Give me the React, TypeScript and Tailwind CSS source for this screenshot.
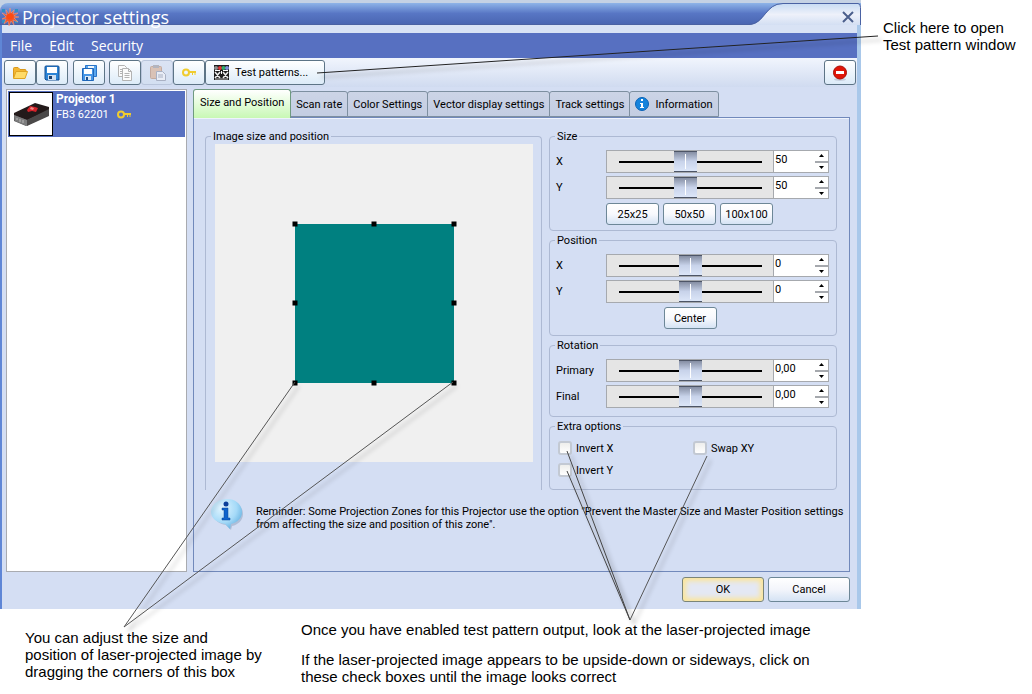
import { useState } from "react";
import type { ReactNode } from "react";

type SliderRowProps = {
    id: string;
    label: string;
    value: string;
    position: number;
};

const tabs = ["Size and Position", "Scan rate", "Color Settings", "Vector display settings", "Track settings", "Information"];

const handles = [
    "left-0 top-0",
    "left-1/2 top-0",
    "left-full top-0",
    "left-0 top-1/2",
    "left-full top-1/2",
    "left-0 top-full",
    "left-1/2 top-full",
    "left-full top-full"
];

function StarIcon() {
    return (
        <svg viewBox="0 0 18 18" className="size-[18px]" aria-hidden="true">
            <g fill="#2f8fc4">
                <rect x="1" y="1" width="3" height="3" />
                <rect x="14" y="1" width="3" height="3" />
                <rect x="1" y="12" width="3" height="3" />
                <rect x="14" y="12" width="3" height="3" />
            </g>
            <path
                d="M9 0l1 5 3-3-1 4 5-1-4 3 5 1-5 1 4 4-5-2 1 5-3-4-2 5-1-5-4 3 2-5-4 0 4-2-4-4 5 2-1-5 3 4z"
                fill="#f0562a"
                stroke="#f2a58c"
                strokeWidth="0.5"
            />
            <circle cx="9" cy="8.500" r="3" fill="#ff4a10" />
        </svg>
    );
}

function FolderIcon() {
    return (
        <svg viewBox="0 0 18 16" className="h-4 w-[18px]" aria-hidden="true">
            <path d="M2.500 13V3.500q0-1 1-1H7l2 2h5q1 0 1 1V7" fill="#f3b632" stroke="#d9981c" />
            <path d="M2.500 13.500l2.500-7h11.500l-2.500 7z" fill="#ffdb68" stroke="#e0a422" strokeLinejoin="round" />
        </svg>
    );
}

function SaveIcon() {
    return (
        <svg viewBox="0 0 16 16" className="size-4" aria-hidden="true">
            <path d="M1 2q0-1 1-1h12q1 0 1 1v13H2l-1-1z" fill="#2b84d6" stroke="#124f94" />
            <rect x="3" y="2" width="10" height="6" fill="#fff" />
            <rect x="4" y="10" width="8" height="5" fill="#cfdff0" />
            <rect x="5" y="11" width="3" height="3" fill="#1b3f6c" />
        </svg>
    );
}

function SaveAllIcon() {
    return (
        <svg viewBox="0 0 18 16" className="h-4 w-[18px]" aria-hidden="true">
            <path d="M5.500 .5h11v11h-11z" fill="#58a6ee" stroke="#2a74c8" />
            <rect x="8" y="1" width="6" height="3" fill="#eef6fd" />
            <path d="M2.500 3.500h11v12h-11z" fill="#4696e6" stroke="#1f67ba" />
            <rect x="4" y="4" width="8" height="5" fill="#fff" />
            <rect x="5" y="11" width="6" height="4" fill="#dce9f7" />
            <rect x="6" y="12" width="2" height="3" fill="#1c4f8c" />
        </svg>
    );
}

function CopyIcon() {
    return (
        <svg viewBox="0 0 16 16" className="size-4" fill="#fbfbfb" stroke="#b3b3b3" aria-hidden="true">
            <path d="M1.500 .5h6l2 2v9h-8z" />
            <path d="M3 4.500h3M3 6.500h3M3 8.500h3" />
            <path d="M5.500 3.500h6l3 3v9h-9z" />
            <path d="M11.500 3.500v3h3M7.500 8.500h5M7.500 10.500h5M7.500 12.500h5" fill="none" />
        </svg>
    );
}

function PasteIcon() {
    return (
        <svg viewBox="0 0 17 17" className="size-[17px]" aria-hidden="true">
            <rect x="1.500" y="2.500" width="11" height="12" rx="1" fill="#d9c2b6" stroke="#c4aba0" />
            <rect x="4" y="1" width="6" height="3" fill="#b3b4be" />
            <path d="M7.500 7.500h6l3 3v6h-9z" fill="#e9edf6" stroke="#a9b1c4" />
            <path d="M9 11h5M9 13h5" stroke="#a9b1c4" />
        </svg>
    );
}

function KeyIcon() {
    return (
        <svg viewBox="0 0 14 9" className="h-[9px] w-[14px]" fill="none" stroke="#f0cc2e" strokeWidth="2" aria-hidden="true">
            <ellipse cx="4" cy="4.500" rx="3" ry="3" />
            <path d="M7 4h7" />
            <path d="M10.500 5v2M13 5v2" strokeWidth="1" />
        </svg>
    );
}

function PatternIcon() {
    return (
        <svg viewBox="0 0 15 15" className="size-[15px]" aria-hidden="true">
            <rect width="15" height="15" fill="#1c1c1c" />
            <circle cx="2" cy="3" r="2" fill="#8d8d8d" />
            <circle cx="6" cy="3" r="2" fill="#e03434" />
            <circle cx="9.500" cy="3" r="2" fill="#2fae6b" />
            <circle cx="13" cy="3" r="2" fill="#7d8fd8" />
            <path d="M1 5.500h5M9 5.500h5M7.500 6v3" stroke="#fff" />
            <path d="M1 7l5 6M6 7l-5 6M9 7l5 6M14 7l-5 6" stroke="#eee" strokeWidth="1.500" />
            <path d="M1 14h13" stroke="#bbb" />
        </svg>
    );
}

function RemoveIcon() {
    return (
        <svg viewBox="0 0 16 16" className="size-4" aria-hidden="true">
            <ellipse cx="8" cy="14.500" rx="6" ry="1.500" fill="#c5cedd" />
            <circle cx="8" cy="7.500" r="6.500" fill="#e01508" stroke="#a90d04" />
            <rect x="4" y="6" width="8" height="3" fill="#fff" />
        </svg>
    );
}

function ProjectorPicture() {
    return (
        <svg viewBox="0 0 42 42" className="size-full" aria-label="FB3 projector" role="img">
            <path d="M4 21v7l12 5 23-11v-8L16 25z" fill="#5d5d5e" />
            <path d="M4 20l21-10 14 4v3L17 27 4 22z" fill="#231a1a" />
            <path d="M4 22l13 5v6L5 28z" fill="#7c7c7d" />
            <path d="M17 27l22-11v7L17 33z" fill="#4b4949" />
            <path d="M17 17l3-4 5 1 3 1-2 4-4-1-4 1z" fill="#d4222a" />
            <path d="M21 14l3 1-1 2-3-1z" fill="#ef8d88" />
            <path d="M7 25v2M10 26v3M13 27v3" stroke="#b9b9b9" />
        </svg>
    );
}

function InfoIcon() {
    return (
        <svg viewBox="0 0 14 14" className="size-[14px]" aria-hidden="true">
            <circle cx="7" cy="7" r="6.500" fill="#1583dc" stroke="#0a62b5" />
            <rect x="6" y="2" width="2" height="2" fill="#fff" />
            <path d="M5 6h3v4h1v1H5v-1h1V7H5z" fill="#fff" />
        </svg>
    );
}

function BalloonIcon() {
    return (
        <svg viewBox="0 0 34 34" className="size-[34px]" aria-hidden="true">
            <defs>
                <radialGradient id="balloon" cx="0.35" cy="0.3" r="0.8">
                    <stop offset="0" stopColor="#e2f5ff" />
                    <stop offset="0.6" stopColor="#a5daf8" />
                    <stop offset="1" stopColor="#5cabdc" />
                </radialGradient>
            </defs>
            <path d="M19 4c8 0 14 6 14 13 0 6-5 11-11 12l-1 4-5-5C9 27 4 23 4 17z" fill="#98a9c4" opacity="0.6" />
            <path d="M17 2c9 0 15 6 15 13 0 6-4 10-11 12l-1 5-5-5C7 26 1 21 1 15 1 8 8 2 17 2z" fill="url(#balloon)" />
            <circle cx="16" cy="7" r="2.500" fill="#0b3f9a" />
            <path d="M12 11h6v10h2v2h-8v-2h2v-8h-2z" fill="#0d63cc" stroke="#0b4596" strokeWidth="0.5" />
        </svg>
    );
}

function ToolButton({ label, disabled, children }: { label: string; disabled?: boolean; children: ReactNode }) {
    return (
        <button
            aria-label={label}
            disabled={disabled}
            className="flex h-[25px] w-8 items-center justify-center rounded-[3px] border border-[#5d7486] bg-linear-to-b from-white to-[#dcebf8] disabled:border-[#b9c5db] disabled:from-[#dbe3f3] disabled:to-[#d3dff1]"
        >
            {children}
        </button>
    );
}

function PushButton({ children }: { children: ReactNode }) {
    return (
        <button className="h-[22px] w-[53px] rounded-[3px] border border-[#6d8797] bg-linear-to-b from-white via-[#f8f9fd] to-[#d5e3f4]">
            {children}
        </button>
    );
}

function Group({ title, className, children }: { title: string; className?: string; children: ReactNode }) {
    return (
        <fieldset className={"min-w-0 rounded-[4px] border border-[#adb9d3] " + (className ?? "")}>
            <legend className="ml-[5px] px-[2px]">{title}</legend>
            {children}
        </fieldset>
    );
}

function SliderRow({ id, label, value, position }: SliderRowProps) {
    const [pos, setPos] = useState(position);
    const [text, setText] = useState(value);

    return (
        <div className="flex h-[23px] items-center">
            <label htmlFor={id} className="w-[50px]">{label}</label>
            <div className="flex h-full flex-1 border border-[#a6a9ae] bg-[#e5e5e5]">
                <input
                    type="range"
                    aria-label={label + " slider"}
                    value={pos}
                    onChange={(e) => setPos(Number(e.target.value))}
                    className="h-[21px] w-0 flex-1 appearance-none bg-[linear-gradient(#000,#000)] bg-[length:calc(100%-23px)_2px] bg-center bg-no-repeat [&::-webkit-slider-thumb]:h-[21px] [&::-webkit-slider-thumb]:w-[23px] [&::-webkit-slider-thumb]:appearance-none [&::-webkit-slider-thumb]:border-y [&::-webkit-slider-thumb]:border-[#4d5566] [&::-webkit-slider-thumb]:bg-[linear-gradient(#fff,#fff),linear-gradient(#858ea3,#c8d3ea_50%,#dce6f8)] [&::-webkit-slider-thumb]:bg-[length:1px_15px,100%_100%] [&::-webkit-slider-thumb]:bg-center [&::-webkit-slider-thumb]:bg-no-repeat"
                />
                <div className="flex w-[55px] border-l border-[#a6a9ae] bg-white">
                    <input
                        id={id}
                        value={text}
                        onChange={(e) => setText(e.target.value)}
                        className="h-4 w-[41px] pl-px outline-none"
                    />
                    <div className="flex flex-1 flex-col divide-y-2 divide-[#a6a9ae]">
                        <button aria-label={label + " up"} className="flex flex-1 items-center justify-center">
                            <svg viewBox="0 0 5 3" className="h-[3px] w-[5px]"><path d="M0 3L2.500 0 5 3z" /></svg>
                        </button>
                        <button aria-label={label + " down"} className="flex flex-1 items-center justify-center">
                            <svg viewBox="0 0 5 3" className="h-[3px] w-[5px]"><path d="M0 0L2.500 3 5 0z" /></svg>
                        </button>
                    </div>
                </div>
            </div>
        </div>
    );
}

function CheckOption({ label }: { label: string }) {
    return (
        <label className="flex h-[14px] items-center gap-1">
            <input
                type="checkbox"
                className="size-[14px] appearance-none rounded-[3px] border-2 border-[#c3c9d3] bg-linear-to-b from-[#eeeeec] to-white checked:bg-[#5770c1]"
            />
            {label}
        </label>
    );
}

function TitleBar() {
    return (
        <header className="relative z-10 flex h-[22px] items-start justify-between rounded-tl-lg border-b border-[#4a62a3] bg-linear-to-b from-[#8fb4e8] via-[#5876c4] to-[#4a66b2]">
            <h1 className="flex items-center gap-[3px] pl-px font-['Open_Sans',sans-serif] text-[18px] leading-7 whitespace-nowrap text-white">
                <StarIcon />
                Projector settings
            </h1>
            <div className="relative h-[22px] w-[112px]">
                <svg viewBox="0 0 112 22" className="size-full" aria-hidden="true">
                    <defs>
                        <linearGradient id="flap" x1="0" y1="0" x2="0" y2="1">
                            <stop offset="0" stopColor="#c9dcf3" />
                            <stop offset="0.5" stopColor="#eef1fa" />
                            <stop offset="1" stopColor="#d3dff3" />
                        </linearGradient>
                    </defs>
                    <path d="M0 22C16 21 16 1 34 1H109q3 0 3 3V22z" fill="url(#flap)" />
                    <path d="M0 21.500C16 21 16 .5 34 .5H109q2.500 0 2.500 4V22" fill="none" stroke="#4a62a3" />
                </svg>
                <button aria-label="Close" className="absolute top-2 right-[7px]">
                    <svg viewBox="0 0 12 12" className="size-3" stroke="#4b5f8c" strokeWidth="2">
                        <path d="M1 1l10 10M11 1L1 11" />
                    </svg>
                </button>
            </div>
        </header>
    );
}

function Toolbar() {
    return (
        <div className="flex h-[29px] items-center bg-linear-to-b from-[#f1f5fd] to-[#d0dbf0] pr-px pl-[2px]">
            <ToolButton label="Open"><FolderIcon /></ToolButton>
            <ToolButton label="Save"><SaveIcon /></ToolButton>
            <div className="ml-[5px]">
                <ToolButton label="Save all"><SaveAllIcon /></ToolButton>
            </div>
            <div className="ml-1 flex">
                <ToolButton label="Copy"><CopyIcon /></ToolButton>
                <ToolButton label="Paste" disabled><PasteIcon /></ToolButton>
                <ToolButton label="Key"><KeyIcon /></ToolButton>
            </div>
            <button className="flex h-[25px] w-[120px] items-center gap-[6px] rounded-[3px] border border-[#5d7486] bg-linear-to-b from-white to-[#dcebf8] pl-2">
                <PatternIcon />
                Test patterns...
            </button>
            <div className="ml-auto">
                <ToolButton label="Remove"><RemoveIcon /></ToolButton>
            </div>
        </div>
    );
}

function ProjectorList() {
    return (
        <aside className="w-[181px] shrink-0 border border-[#a9abb0] bg-white p-px">
            <div className="flex h-[46px] gap-[3px] bg-[#5770c1] p-px text-white">
                <div className="size-11 border border-black bg-white">
                    <ProjectorPicture />
                </div>
                <div className="leading-[15px]">
                    <p className="text-[12px] font-bold">Projector 1</p>
                    <p className="flex items-center gap-2">FB3 62201 <KeyIcon /></p>
                </div>
            </div>
        </aside>
    );
}

function TabBar() {
    const [active, setActive] = useState(0);

    return (
        <div role="tablist" className="flex items-end">
            {tabs.map((tab, index) => (
                <button
                    key={tab}
                    role="tab"
                    aria-selected={index === active}
                    onClick={() => setActive(index)}
                    className={
                        index === active
                            ? "z-10 -mb-px h-[29px] rounded-t-[3px] border border-b-0 border-[#6f9a80] bg-linear-to-b from-white to-[#c8f8b4] px-[6px] pb-1"
                            : "-ml-px flex h-[26px] items-center gap-[6px] rounded-t-[3px] border border-[#7d8fa0] bg-linear-to-b from-[#ccd4e6] to-[#c3cde2] px-[5px]"
                    }
                >
                    {tab === "Information" && <InfoIcon />}
                    {tab}
                </button>
            ))}
        </div>
    );
}

function ImageArea() {
    return (
        <Group title="Image size and position" className="flex-1 rounded-b-none border-b-0">
            <div className="relative mt-px mr-2 ml-[9px] aspect-square bg-[#f0f0f0]">
                <div className="absolute inset-1/4 bg-[#008080]">
                    {handles.map((place) => (
                        <span key={place} className={"absolute size-[5px] -translate-1/2 bg-black " + place} />
                    ))}
                </div>
            </div>
        </Group>
    );
}

function SettingsPanel() {
    return (
        <div className="border border-[#7189bb] pt-3 pr-3 pb-10 pl-[11px] shadow-[inset_0_1px_#eef3fc]">
            <div className="flex gap-[7px]">
                <ImageArea />
                <div className="flex w-[288px] flex-col gap-[3px]">
                    <Group title="Size">
                        <div className="flex flex-col gap-[3px] pt-[7px] pr-[7px] pb-[5px] pl-[6px]">
                            <SliderRow id="size-x" label="X" value="50" position={47} />
                            <SliderRow id="size-y" label="Y" value="50" position={47} />
                            <div className="mt-px ml-[50px] flex gap-1">
                                <PushButton>25x25</PushButton>
                                <PushButton>50x50</PushButton>
                                <PushButton>100x100</PushButton>
                            </div>
                        </div>
                    </Group>
                    <Group title="Position">
                        <div className="flex flex-col gap-[3px] pt-[7px] pr-[7px] pb-[6px] pl-[6px]">
                            <SliderRow id="position-x" label="X" value="0" position={50} />
                            <SliderRow id="position-y" label="Y" value="0" position={50} />
                            <div className="mt-px mr-[55px] ml-[50px] flex justify-center">
                                <PushButton>Center</PushButton>
                            </div>
                        </div>
                    </Group>
                    <Group title="Rotation">
                        <div className="flex flex-col gap-[3px] pt-[7px] pr-[7px] pb-2 pl-[6px]">
                            <SliderRow id="rotation-primary" label="Primary" value="0,00" position={50} />
                            <SliderRow id="rotation-final" label="Final" value="0,00" position={50} />
                        </div>
                    </Group>
                    <Group title="Extra options">
                        <div className="grid grid-cols-2 gap-y-2 pt-2 pr-2 pb-3 pl-2">
                            <CheckOption label="Invert X" />
                            <CheckOption label="Swap XY" />
                            <CheckOption label="Invert Y" />
                        </div>
                    </Group>
                </div>
            </div>
            <div className="mt-[7px] -mr-3 flex items-end gap-3 pl-[5px]">
                <BalloonIcon />
                <p className="flex-1">
                    Reminder: Some Projection Zones for this Projector use the option ''Prevent the Master Size and Master Position settings
                    from affecting the size and position of this zone''.
                </p>
            </div>
        </div>
    );
}

// Pointer lines from the notes to the controls they describe
function Callouts() {
    return (
        <svg className="pointer-events-none absolute inset-0 z-20 size-full" fill="none" aria-hidden="true">
            <g className="drop-shadow-[4px_4px_2px_rgba(0,0,0,0.35)]">
                <path d="M878 36L317 73" stroke="#222" />
                <path d="M295 382L124 627L453 382" stroke="#555" />
                <path d="M567 451L630 620L567 471" stroke="#444" />
                <path d="M707 456L630 620" stroke="#555" />
            </g>
        </svg>
    );
}

export default function App() {
    return (
        <div className="relative min-h-screen bg-white font-['Liberation_Sans',sans-serif] text-[15px] leading-[17px] text-black">
            <div className="flex">
                <main className="min-w-0 flex-1 bg-[#c5d2e4] pt-[3px] font-[Roboto,sans-serif] text-[11px] leading-[13px]">
                    <TitleBar />
                    <div className="border-r-4 border-l-2 border-r-[#a9c8ea] border-l-[#5f86d6] bg-[#d4def3]">
                        <nav className="flex h-[33px] gap-[17px] border-t-8 border-[#d9e3f5] bg-[#5770c1] px-2 font-['Open_Sans',sans-serif] text-[14px] leading-[25px] text-white">
                            <button>File</button>
                            <button>Edit</button>
                            <button>Security</button>
                        </nav>
                        <Toolbar />
                        <div className="flex gap-[6px] pt-[2px] pr-[7px] pl-1">
                            <ProjectorList />
                            <div className="min-w-0 flex-1">
                                <TabBar />
                                <SettingsPanel />
                            </div>
                        </div>
                        <footer className="flex justify-end gap-1 pt-[5px] pr-[7px] pb-[7px]">
                            <button className="h-[25px] w-[82px] rounded-[3px] border border-[#7b8578] bg-[#e4e8f4] shadow-[inset_0_0_5px_3px_#fbe59a]">
                                OK
                            </button>
                            <button className="h-[25px] w-[82px] rounded-[3px] border border-[#6d8797] bg-linear-to-b from-white via-[#f3f5fb] to-[#d5e3f4]">
                                Cancel
                            </button>
                        </footer>
                    </div>
                </main>
                <p className="w-[171px] shrink-0 pt-[19px] pl-[22px]">
                    Click here to open
                    <br />
                    Test pattern window
                </p>
            </div>
            <div className="flex pl-[25px]">
                <p className="w-[276px] pt-5">
                    You can adjust the size and
                    <br />
                    position of laser-projected image by
                    <br />
                    dragging the corners of this box
                </p>
                <div className="flex max-w-[520px] flex-col gap-[13px] pt-3">
                    <p>Once you have enabled test pattern output, look at the laser-projected image</p>
                    <p>If the laser-projected image appears to be upside-down or sideways, click on these check boxes until the image looks correct</p>
                </div>
            </div>
            <Callouts />
        </div>
    );
}
